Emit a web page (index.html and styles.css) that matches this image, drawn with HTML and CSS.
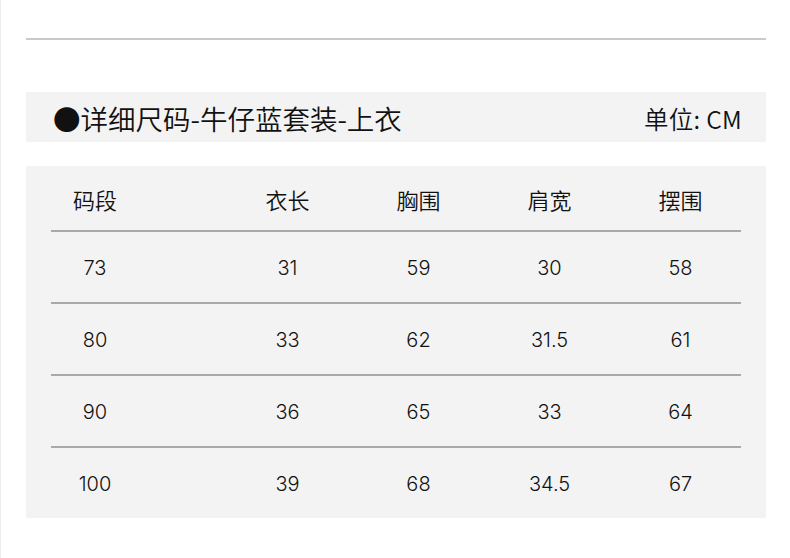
FILE: index.html
```html
<!DOCTYPE html>
<html lang="zh">
<head>
<meta charset="utf-8">
<link rel="stylesheet" href="styles.css">
</head>
<body>
<div class="page">
  <div class="rule"></div>
  <div class="band">
    <div class="title">●详细尺码-牛仔蓝套装-上衣</div>
    <div class="unit">单位: CM</div>
  </div>
  <div class="table">
    <div class="row head">
      <div class="c first">码段</div><div class="c">衣长</div><div class="c">胸围</div><div class="c">肩宽</div><div class="c">摆围</div>
    </div>
    <div class="row">
      <div class="c first">73</div><div class="c">31</div><div class="c">59</div><div class="c">30</div><div class="c">58</div>
    </div>
    <div class="row">
      <div class="c first">80</div><div class="c">33</div><div class="c">62</div><div class="c">31.5</div><div class="c">61</div>
    </div>
    <div class="row">
      <div class="c first">90</div><div class="c">36</div><div class="c">65</div><div class="c">33</div><div class="c">64</div>
    </div>
    <div class="row last">
      <div class="c first">100</div><div class="c">39</div><div class="c">68</div><div class="c">34.5</div><div class="c">67</div>
    </div>
  </div>
</div>
</body>
</html>
```
FILE: styles.css
```css
* { box-sizing: border-box; }
html, body {
  margin: 0;
  padding: 0;
  background: #ffffff;
}
body {
  font-family: "Inter", "Noto Sans CJK SC", sans-serif;
  color: #111111;
}
.page {
  width: 790px;
  height: 558px;
  padding: 38px 24px 0 26px;
  border-left: 1px solid #eeeeee;
}
.page .rule {
  height: 2px;
  background: #c9c9c9;
  margin-left: -1px;
}
.band {
  margin-top: 52px;
  margin-left: -1px;
  height: 50px;
  background: #f3f3f3;
  display: flex;
  align-items: center;
  justify-content: space-between;
  padding: 2px 24px 0 27px;
}
.title {
  font-family: "Noto Sans CJK SC", sans-serif;
  font-size: 27.5px;
  font-weight: 350;
}
.unit {
  font-family: "Noto Sans CJK SC", sans-serif;
  font-size: 24.5px;
  font-weight: 350;
  letter-spacing: 0.3px;
}
.table {
  margin-top: 24px;
  margin-left: -1px;
  height: 352px;
  background: #f3f3f3;
  padding: 0 25px;
  overflow: hidden;
}
.row {
  display: grid;
  grid-template-columns: 171px 131px 131px 131px 131px;
  align-items: center;
  height: 72px;
  padding-top: 2px;
  border-bottom: 2px solid #a9a9a9;
  font-size: 20px;
  font-weight: 300;
}
.row.head {
  height: 66px;
  padding-top: 1px;
  font-family: "Noto Sans CJK SC", sans-serif;
  font-size: 22px;
  font-weight: 350;
}
.row.last {
  border-bottom: none;
  height: 70px;
}
.c {
  text-align: center;
  white-space: nowrap;
}
.c.first {
  padding-right: 83px;
}
```
